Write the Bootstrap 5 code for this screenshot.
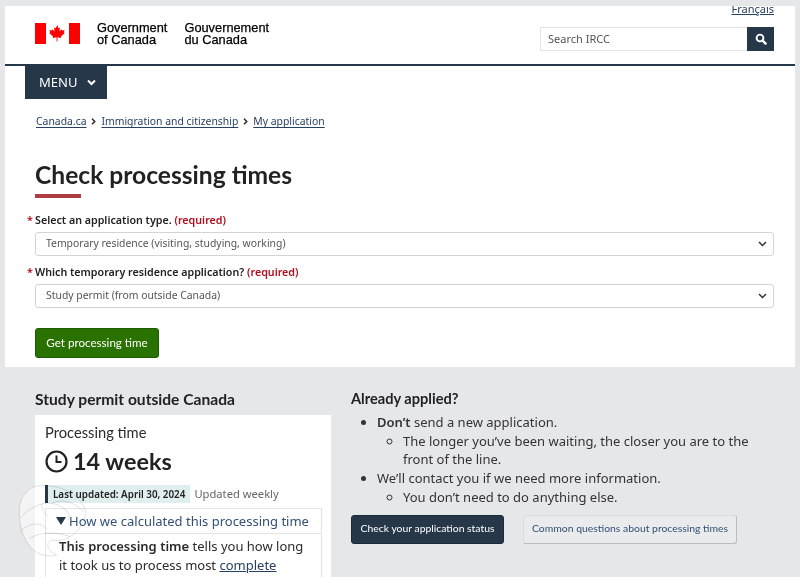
<!DOCTYPE html>
<html lang="en">
<head>
<meta charset="utf-8">
<title>Check processing times</title>
<link href="https://cdn.jsdelivr.net/npm/bootstrap@5.3.0/dist/css/bootstrap.min.css" rel="stylesheet">
<style>
html,body{height:577px;overflow:hidden}
body{background:#e6e7e9;font-family:"Noto Sans",sans-serif;color:#2b2b2b;font-size:14px}
a{color:#284162}
.page-sheet{background:#fff;margin:6px 5px 0;height:361px;overflow:hidden}
.top-head{height:58px;padding:0 21px 0 30px;border-bottom:2px solid #26374a;box-sizing:content-box}
.gov-sig{font-family:"Liberation Sans",sans-serif;font-size:12.800px;line-height:12px;color:#000;padding-top:17px;gap:17px}
.gov-sig .gov-txt{margin-top:-1px;-webkit-text-stroke:.25px #000}
.lang-link{font-size:11px;line-height:14px;margin-top:-4px}
.search-box{width:234px;height:24px;margin-top:11px}
.search-field{flex:1;border:1px solid #e2e3e5;border-right:0;font-size:11px;padding:0 7px;line-height:22px;color:#555;background:#fff}
.search-go{width:27px;background:#26374a}
.menu-tab{width:82px;height:33px;margin-left:20px;background:#26374a;color:#fff;font-size:13px;padding-left:14px;gap:10px}
.crumbs{font-size:10.400px;line-height:16px;padding:14px 0 0 31px;gap:5px}
.crumbs a{text-underline-offset:2px}
.page-title{font-family:Lato,sans-serif;font-weight:700;font-size:24.600px;line-height:32px;color:#222;margin:30px 0 0 30px}
.title-bar{width:46px;height:4px;background:#af3c43;margin:3px 0 0 30px}
.field-label{font-size:10.700px;font-weight:600;line-height:16px;color:#222;margin:0}
.field-label .star,.field-label .req{color:#b10e1e;font-weight:600}
.star{display:inline-block;width:8px;margin-left:-8px}
.pick{height:24px;border:1px solid #d4d4d4;border-radius:3px;font-size:10.400px;color:#555;padding-left:10px;padding-right:6px;background:#fff}
.form-area{padding:14px 21px 0 30px}
.form-gap{margin-top:8px}
.go-btn{background:#2a7200;border:1px solid #1d5b00;color:#fff;font-family:Lato,sans-serif;font-size:11.600px;height:30px;width:124px;border-radius:3px;padding:0;margin-top:20px}
.lower{padding:22px 0 0 35px;gap:20px}
.left-col{width:296px}
.right-col{width:424px}
.sub-h{font-family:Lato,sans-serif;font-weight:700;font-size:15.600px;line-height:20px;color:#222;margin:0}
.sub-h-alt{font-size:14.600px}
.time-card{background:#fff;height:300px;margin-top:6px;padding:7px 9px 0 10px}
.time-lbl{font-family:Lato,sans-serif;font-size:14.700px;line-height:20px;color:#2b2b2b}
.time-val{font-family:Lato,sans-serif;font-size:23.400px;font-weight:700;line-height:34px;color:#222;gap:5px;margin-top:2px}
.updated-row{margin-top:7px;gap:4px;line-height:18px}
.updated-tag{background:#dfeeee;border-left:3px solid #26374a;padding:0 5px;font-weight:600;font-size:9.850px;color:#222}
.updated-note{color:#666;font-size:11.200px}
.calc-box{border:1px solid #e4e4e4;margin-top:5px;font-size:13px}
.calc-head{color:#335075;height:25px;line-height:24px;padding-left:10px;border-bottom:1px solid #e4e4e4;gap:3px}
.calc-body{padding:3px 13px;line-height:18.500px;color:#2b2b2b;font-size:13px}
.calc-body a{color:#284162}
.info-list{margin:4px 0 0;padding-left:26px;font-size:13px;line-height:18.700px;color:#333}
.info-list ul{padding-left:26px}
.btn-row{margin-top:8px;gap:19px}
.dark-btn{background:#26374a;border:1px solid #1c2937;color:#fff;font-family:Lato,sans-serif;font-size:10.400px;height:29px;width:153px;padding:0;border-radius:3px}
.light-btn{background:#eaebed;border:1px solid #dcdcdc;border-right-color:#b9bcc0;border-bottom-color:#b9bcc0;color:#335075;font-family:Lato,sans-serif;font-size:10.400px;height:29px;width:214px;padding:0;border-radius:3px}
.wm{position:absolute;left:10px;top:475px;mix-blend-mode:multiply}
.wm-fill{position:absolute;left:10px;top:475px}
</style>
</head>
<body>
<div class="page-sheet">
  <div class="top-head d-flex justify-content-between">
    <div class="gov-sig d-flex align-items-start">
      <svg width="45" height="21" viewBox="0 0 45 21" aria-hidden="true">
        <rect width="11" height="21" fill="#f00"/><rect x="34" width="11" height="21" fill="#f00"/>
        <path fill="#f00" d="M22.500 2l-1.900 3.200-1.600-.8.600 4-2.200-2.200-.5 1.200-2.500-.4.800 2.600-1.100.5 4 3.300-.5 1.500 3.900-.6.100 4.200h.8l.100-4.200 3.900.6-.5-1.500 4-3.300-1.100-.5.800-2.600-2.500.4-.5-1.200-2.200 2.200.6-4-1.600.8z"/>
      </svg>
      <div class="gov-txt">Government<br>of Canada</div>
      <div class="gov-txt">Gouvernement<br>du Canada</div>
    </div>
    <div class="d-flex flex-column align-items-end">
      <a href="#" class="lang-link">Français</a>
      <div class="search-box d-flex">
        <div class="search-field">Search IRCC</div>
        <div class="search-go d-flex align-items-center justify-content-center">
          <svg width="12" height="12" viewBox="0 0 12 12" aria-hidden="true"><circle cx="5" cy="5" r="3.400" fill="none" stroke="#fff" stroke-width="1.900"/><path d="M7.600 7.600l3 3" stroke="#fff" stroke-width="2.400" stroke-linecap="round"/></svg>
        </div>
      </div>
    </div>
  </div>
  <div class="menu-tab d-flex align-items-center">MENU
    <svg width="9" height="7" viewBox="0 0 9 7" aria-hidden="true"><path d="M1 1.500l3.500 3.500L8 1.500" fill="none" stroke="#fff" stroke-width="2"/></svg>
  </div>
  <div class="crumbs d-flex align-items-center">
    <a href="#">Canada.ca</a>
    <svg width="5" height="7" viewBox="0 0 5 7" aria-hidden="true"><path d="M1 .8l2.800 2.700L1 6.200" fill="none" stroke="#222" stroke-width="1.400"/></svg>
    <a href="#">Immigration and citizenship</a>
    <svg width="5" height="7" viewBox="0 0 5 7" aria-hidden="true"><path d="M1 .8l2.800 2.700L1 6.200" fill="none" stroke="#222" stroke-width="1.400"/></svg>
    <a href="#">My application</a>
  </div>
  <h1 class="page-title">Check processing times</h1>
  <div class="title-bar"></div>
  <div class="form-area">
    <p class="field-label"><span class="star">*</span>Select an application type. <span class="req">(required)</span></p>
    <div class="pick d-flex align-items-center justify-content-between mt-1">Temporary residence (visiting, studying, working)
      <svg width="9" height="6" viewBox="0 0 9 6" aria-hidden="true"><path d="M1 1l3.500 3.500L8 1" fill="none" stroke="#333" stroke-width="1.500"/></svg>
    </div>
    <p class="field-label form-gap"><span class="star">*</span>Which temporary residence application? <span class="req">(required)</span></p>
    <div class="pick d-flex align-items-center justify-content-between mt-1">Study permit (from outside Canada)
      <svg width="9" height="6" viewBox="0 0 9 6" aria-hidden="true"><path d="M1 1l3.500 3.500L8 1" fill="none" stroke="#333" stroke-width="1.500"/></svg>
    </div>
    <button type="button" class="btn go-btn d-block">Get processing time</button>
  </div>
</div>
<div class="lower d-flex">
  <div class="left-col">
    <h2 class="sub-h">Study permit outside Canada</h2>
    <div class="time-card">
      <div class="time-lbl">Processing time</div>
      <div class="time-val d-flex align-items-center">
        <svg width="23" height="23" viewBox="0 0 23 23" aria-hidden="true"><circle cx="11.500" cy="11.500" r="10" fill="none" stroke="#222" stroke-width="2.200"/><path d="M11.500 5.500v6.500h5" fill="none" stroke="#222" stroke-width="2"/></svg>
        <span>14 weeks</span>
      </div>
      <div class="updated-row d-flex align-items-center">
        <span class="updated-tag">Last updated: April 30, 2024</span>
        <span class="updated-note">Updated weekly</span>
      </div>
      <div class="calc-box">
        <div class="calc-head d-flex align-items-center">
          <svg width="10" height="8" viewBox="0 0 10 8" aria-hidden="true"><path d="M0 0h10L5 8z" fill="#26374a"/></svg>
          <span>How we calculated this processing time</span>
        </div>
        <div class="calc-body"><b class="fw-semibold">This processing time</b> tells you how long it took us to process most <a href="#">complete</a></div>
      </div>
    </div>
  </div>
  <div class="right-col">
    <h2 class="sub-h sub-h-alt">Already applied?</h2>
    <ul class="info-list">
      <li><b class="fw-semibold">Don’t</b> send a new application.
        <ul><li>The longer you’ve been waiting, the closer you are to the front of the line.</li></ul>
      </li>
      <li>We’ll contact you if we need more information.
        <ul><li>You don’t need to do anything else.</li></ul>
      </li>
    </ul>
    <div class="btn-row d-flex">
      <button type="button" class="btn dark-btn">Check your application status</button>
      <button type="button" class="btn light-btn">Common questions about processing times</button>
    </div>
  </div>
</div>
<svg class="wm-fill" width="110" height="100" viewBox="0 0 330 300" aria-hidden="true">
  <clipPath id="wmClip"><rect x="0" y="0" width="75" height="300"/></clipPath>
  <path clip-path="url(#wmClip)" d="M95 32C60 30 30 60 28 105c-2 45 12 105 57 130 15 8 40 10 55 5-30-15-35-35-15-45 45 10 90-25 103-80-8-45-58-85-133-83z" fill="#f4f4f5"/>
  <path d="M120 240h170" stroke="#fff" stroke-width="6" stroke-dasharray="12 8" fill="none" opacity=".8"/>
</svg>
<svg class="wm" width="110" height="100" viewBox="0 0 330 300" aria-hidden="true">
  <path d="M95 32C60 30 30 60 28 105c-2 45 12 105 57 130 15 8 40 10 55 5-30-15-35-35-15-45 45 10 90-25 103-80-8-45-58-85-133-83z" fill="none" stroke="#d2d4d7" stroke-width="2"/>
  <path d="M30 130c20-25 60-50 95-45 35 5 60 30 50 50M30 170c30-30 70-30 80-5M60 190c30-20 80-20 120-5M95 85c0 15 5 30 20 40M125 85c30-15 70-5 95 25" fill="none" stroke="#cfd1d4" stroke-width="2"/>
</svg>
</body>
</html>
